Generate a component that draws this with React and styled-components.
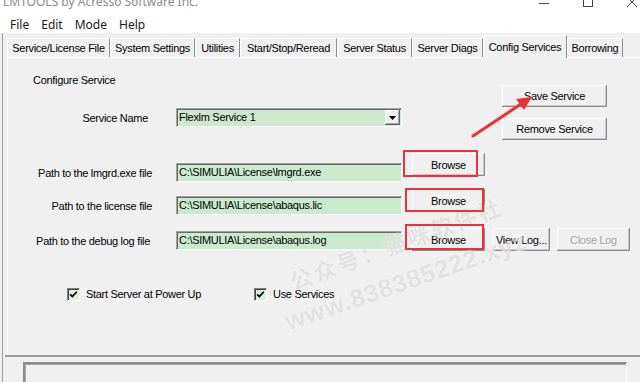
import React from 'react';
import styled, { createGlobalStyle } from 'styled-components';

const GlobalStyle = createGlobalStyle`
  html, body { margin: 0; padding: 0; background: #f0f0f0; overflow: hidden; }
  * { box-sizing: border-box; }
`;

const Window = styled.div`
  position: relative;
  width: 640px;
  height: 382px;
  overflow: hidden;
  background: #f0f0f0;
  font-family: "Liberation Sans", Arial, sans-serif;
  font-size: 11px;
  letter-spacing: -0.3px;
  color: #000;
  display: flex;
  flex-direction: column;
`;

const TitleBar = styled.div`
  flex: none;
  height: 13px;
  background: #fff;
  display: flex;
  justify-content: space-between;
  overflow: hidden;
  padding-left: 3px;
`;

const TitleText = styled.div`
  font-family: "Noto Sans", sans-serif;
  font-size: 12px;
  line-height: 12px;
  letter-spacing: 0;
  margin-top: -4px;
  color: #8a8a8a;
  white-space: nowrap;
`;

const Controls = styled.div`
  display: flex;
  align-items: flex-start;
  gap: 34px;
  padding-right: 3px;
  svg { margin-top: -3px; display: block; }
`;

const MenuBar = styled.div`
  flex: none;
  height: 20px;
  background: #fff;
  display: flex;
  gap: 12px;
  padding: 3px 0 0 10px;
  font-family: "Noto Sans", sans-serif;
  font-size: 12px;
  line-height: 17px;
  letter-spacing: 0;
  color: #1a1a1a;
`;

const Body = styled.div`
  flex: 1;
  display: flex;
  flex-direction: column;
  margin-left: 2px;
  border-left: 1px solid #a0a0a0;
`;

const TabStrip = styled.div`
  flex: none;
  height: 24px;
  display: flex;
  align-items: flex-end;
  padding-left: 4px;
`;

const Tab = styled.div`
  width: ${p => p.$w}px;
  height: ${p => (p.$active ? 23 : 19)}px;
  line-height: ${p => (p.$active ? 22 : 19)}px;
  margin-bottom: ${p => (p.$active ? -1 : 0)}px;
  position: relative;
  z-index: ${p => (p.$active ? 1 : 0)};
  text-align: center;
  white-space: nowrap;
  background: #f0f0f0;
  border-top: 1px solid #fff;
  border-left: 1px solid #fff;
  border-right: 1px solid #8c8c8c;
`;

const Panel = styled.div`
  flex: none;
  height: 298px;
  margin-left: 4px;
  border-top: 1px solid #fff;
  border-left: 1px solid #fff;
  display: flex;
  flex-direction: column;
`;

const TopSection = styled.div`
  display: flex;
`;

const LeftCol = styled.div`
  width: 394px;
  display: flex;
  flex-direction: column;
`;

const Heading = styled.div`
  margin-top: 16px;
  padding-left: 25px;
  line-height: 13px;
`;

const RightCol = styled.div`
  margin-left: 100px;
  padding-top: 27px;
  display: flex;
  flex-direction: column;
  gap: 11px;
`;

const FieldRow = styled.div`
  display: flex;
  align-items: flex-start;
  margin-top: ${p => p.$mt}px;
`;

const Label = styled.div`
  width: 144px;
  margin-right: 24px;
  margin-top: ${p => (p.$offset || 0) + 1}px;
  padding-right: ${p => p.$inset || 0}px;
  height: 19px;
  line-height: 19px;
  text-align: right;
  white-space: nowrap;
`;

const Field = styled.div`
  width: 226px;
  height: 19px;
  margin-top: ${p => p.$offset || 0}px;
  background: #cce8cf;
  border-top: 1px solid #a0a0a0;
  border-left: 1px solid #a0a0a0;
  border-right: 1px solid #fff;
  border-bottom: 1px solid #fff;
  box-shadow: inset 1px 1px #696969;
  padding: 1px 0 0 2px;
  line-height: 15px;
  white-space: nowrap;
  overflow: hidden;
  display: flex;
  align-items: flex-start;
  justify-content: space-between;
`;

const DropButton = styled.div`
  width: 15px;
  height: 15px;
  margin-right: 1px;
  background: #f0f0f0;
  box-shadow: inset -1px -1px #696969, inset 1px 1px #fff, inset -2px -2px #a0a0a0;
  display: flex;
  align-items: center;
  justify-content: center;
`;

const Button = styled.div`
  width: ${p => p.$w}px;
  height: ${p => p.$h || 23}px;
  margin-left: ${p => p.$ml || 0}px;
  background: #f0f0f0;
  box-shadow: inset -1px -1px #8a8a8a, inset 1px 1px #fff, inset -2px -2px #c8c8c8;
  display: flex;
  align-items: center;
  justify-content: center;
  white-space: nowrap;
  color: ${p => (p.$disabled ? '#a0a0a0' : '#000')};
  text-shadow: ${p => (p.$disabled ? '1px 1px #fff' : 'none')};
`;

const CheckRow = styled.div`
  margin-top: 37px;
  padding-left: 59px;
  display: grid;
  grid-template-columns: 187px auto;
`;

const CheckItem = styled.label`
  display: flex;
  align-items: center;
  gap: 6px;
  height: 13px;
  line-height: 13px;
`;

const Box = styled.span`
  width: 13px;
  height: 13px;
  background: #dcefdc;
  border-top: 1px solid #808080;
  border-left: 1px solid #808080;
  border-right: 1px solid #fff;
  border-bottom: 1px solid #fff;
  box-shadow: inset 1px 1px #404040;
  display: flex;
  align-items: center;
  justify-content: center;
`;

const Separator = styled.div`
  flex: none;
  height: 2px;
  margin-left: 2px;
  background: #9a9a9a;
`;

const StatusBox = styled.div`
  flex: none;
  margin: 5px 0 0 20px;
  width: 604px;
  height: 22px;
  border-top: 2px solid #8c8c8c;
  border-left: 2px solid #8c8c8c;
  border-right: 1px solid #fff;
  box-shadow: inset 1px 1px #a8a8a8;
`;

const RedBox = styled.div`
  position: absolute;
  left: ${p => p.$x}px;
  top: ${p => p.$y}px;
  width: ${p => p.$w}px;
  height: ${p => p.$h}px;
  border: 2px solid #e8323c;
  pointer-events: none;
`;

const Arrow = styled.svg`
  position: absolute;
  left: 468px;
  top: 90px;
`;

const Watermark = styled.div`
  position: absolute;
  left: ${p => p.$x}px;
  top: ${p => p.$y}px;
  transform-origin: left center;
  transform: rotate(${p => p.$deg}deg);
  font-family: ${p => p.$cjk ? '"Noto Sans CJK SC", sans-serif' : '"Liberation Sans", Arial, sans-serif'};
  font-weight: bold;
  font-size: ${p => p.$size}px;
  letter-spacing: ${p => p.$ls}px;
  line-height: 1;
  white-space: nowrap;
  color: rgba(150, 150, 150, 0.25);
  text-shadow: 0 0 2px rgba(255, 255, 255, 0.9);
  pointer-events: none;
`;

const tabs = [
  ['Service/License File', 103],
  ['System Settings', 85],
  ['Utilities', 45],
  ['Start/Stop/Reread', 97],
  ['Server Status', 75],
  ['Server Diags', 71],
  ['Config Services', 84, true],
  ['Borrowing', 56],
];

const paths = [
  { label: 'Path to the lmgrd.exe file', value: 'C:\\SIMULIA\\License\\lmgrd.exe', mt: 13, offset: 10 },
  { label: 'Path to the license file', value: 'C:\\SIMULIA\\License\\abaqus.lic', mt: 6, offset: 7 },
  { label: 'Path to the debug log file', value: 'C:\\SIMULIA\\License\\abaqus.log', mt: 12, offset: 3, inset: 2, log: true },
];

const Check = () => (
  <svg width="9" height="9" viewBox="0 0 9 9">
    <path d="M1.2 4.3 L3.4 6.6 L7.8 1.8" fill="none" stroke="#000" strokeWidth="1.7" />
  </svg>
);

export default function App() {
  return (
    <Window>
      <GlobalStyle />
      <TitleBar>
        <TitleText>LMTOOLS by Acresso Software Inc.</TitleText>
        <Controls>
          <svg width="10" height="10" viewBox="0 0 10 10">
            <path d="M0 6.5 H10" stroke="#444" strokeWidth="1" />
          </svg>
          <svg width="10" height="10" viewBox="0 0 10 10">
            <rect x="0.5" y="0.5" width="9" height="9" fill="none" stroke="#444" strokeWidth="1" />
          </svg>
          <svg width="10" height="10" viewBox="0 0 10 10">
            <path d="M0 0 L10 10 M10 0 L0 10" stroke="#444" strokeWidth="1" />
          </svg>
        </Controls>
      </TitleBar>
      <MenuBar>
        <span>File</span>
        <span>Edit</span>
        <span>Mode</span>
        <span>Help</span>
      </MenuBar>
      <Body>
        <TabStrip>
          {tabs.map(([name, w, active]) => (
            <Tab key={name} $w={w} $active={active}>{name}</Tab>
          ))}
        </TabStrip>
        <Panel>
          <TopSection>
            <LeftCol>
              <Heading>Configure Service</Heading>
              <FieldRow $mt={21}>
                <Label $inset={4}>Service Name</Label>
                <Field>
                  <span>Flexlm Service 1</span>
                  <DropButton>
                    <svg width="7" height="4" viewBox="0 0 7 4">
                      <polygon points="0,0 7,0 3.5,4" fill="#000" />
                    </svg>
                  </DropButton>
                </Field>
              </FieldRow>
            </LeftCol>
            <RightCol>
              <Button $w={105} $h={22}>Save Service</Button>
              <Button $w={105} $h={22}>Remove Service</Button>
            </RightCol>
          </TopSection>

          {paths.map(p => (
            <FieldRow key={p.label} $mt={p.mt}>
              <Label $offset={p.offset} $inset={p.inset}>{p.label}</Label>
              <Field $offset={p.offset}>{p.value}</Field>
              <Button $w={73} $ml={10}>Browse</Button>
              {p.log && <Button $w={57} $ml={8}>View Log...</Button>}
              {p.log && <Button $w={73} $ml={7} $disabled>Close Log</Button>}
            </FieldRow>
          ))}

          <CheckRow>
            <CheckItem><Box><Check /></Box>Start Server at Power Up</CheckItem>
            <CheckItem><Box><Check /></Box>Use Services</CheckItem>
          </CheckRow>
        </Panel>
        <Separator />
        <StatusBox />
      </Body>

      <Watermark $x={290} $y={270} $deg={-20} $size={22} $ls={3} $cjk>公众号：猫咪软件社</Watermark>
      <Watermark $x={286} $y={310} $deg={-19} $size={25} $ls={1}>www.838385222.xyz</Watermark>

      <RedBox $x={403} $y={150} $w={75} $h={27} />
      <RedBox $x={405} $y={188} $w={79} $h={24} />
      <RedBox $x={405} $y={224} $w={79} $h={26} />

      <Arrow width="72" height="52" viewBox="0 0 72 52">
        <line x1="5" y1="46" x2="53" y2="14" stroke="#e8323c" strokeWidth="3" strokeLinecap="round" />
        <polygon points="64,7 56,20 48,9" fill="#e8323c" />
      </Arrow>
    </Window>
  );
}
